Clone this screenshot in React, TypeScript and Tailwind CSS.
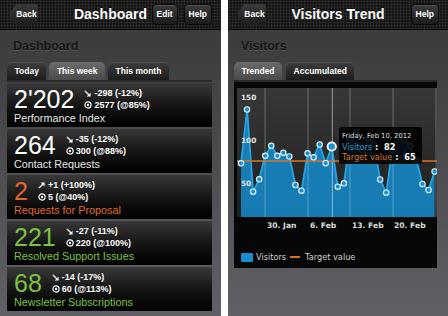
import React from "react";

type Kpi = {
  value: string;
  delta: string;
  up?: boolean;
  target: string;
  label: string;
  tone: "white" | "orange" | "green";
};

const kpis: Kpi[] = [
  { value: "2'202", delta: "-298 (-12%)", target: "2577 (@85%)", label: "Performance Index", tone: "white" },
  { value: "264", delta: "-35 (-12%)", target: "300 (@88%)", label: "Contact Requests", tone: "white" },
  { value: "2", delta: "+1 (+100%)", up: true, target: "5 (@40%)", label: "Requests for Proposal", tone: "orange" },
  { value: "221", delta: "-27 (-11%)", target: "220 (@100%)", label: "Resolved Support Issues", tone: "green" },
  { value: "68", delta: "-14 (-17%)", target: "60 (@113%)", label: "Newsletter Subscriptions", tone: "green" },
];

// visitors per day, already in screen y (abs coords of the 448x316 frame)
const visitorsY = [
  163.3, 109.5, 191.7, 179.3, 155.8, 145.8, 155.8, 152.7, 156.5, 185, 190.7, 153.3, 157.3, 144.5, 163.2,
  146.5, 186.7, 183.3, 140, 132, 150, 138, 145, 179.5, 192.7, 150, 136, 140, 146, 160, 184, 190, 171.5,
];

const ArrowIcon = ({ up }: { up?: boolean }) =>
  up ? (
    <svg width="7" height="7" viewBox="0 0 8 8">
      <path d="M1 7L5.5 2.5" stroke="white" strokeWidth="1.6" />
      <path d="M3 0.5H7.5V5Z" fill="white" />
    </svg>
  ) : (
    <svg width="7" height="7" viewBox="0 0 8 8">
      <path d="M1 1L5.5 5.5" stroke="white" strokeWidth="1.6" />
      <path d="M7.5 3V7.5H3Z" fill="white" />
    </svg>
  );

const TargetIcon = () => (
  <svg width="8" height="8" viewBox="0 0 8 8">
    <circle cx="4" cy="4" r="3.1" stroke="white" strokeWidth="1.2" fill="none" />
    <circle cx="4" cy="4" r="1.2" fill="white" />
  </svg>
);

const NavButton = ({ children }: { children: React.ReactNode }) => (
  <div className="h-[21px] px-[4px] flex items-center rounded-[4px] border border-[#0a0a0a] bg-linear-to-b from-[#3c3c3c] to-[#1c1c1c] shadow-[inset_0_1px_0_rgba(255,255,255,0.12)] text-[8.5px] font-bold text-white">
    {children}
  </div>
);

const BackButton = () => (
  <div className="h-[21px] w-[29px] pl-[6px] flex items-center justify-center rounded-r-[4px] bg-linear-to-b from-[#3c3c3c] to-[#1c1c1c] [clip-path:polygon(7px_0,100%_0,100%_100%,7px_100%,0_50%)] text-[8.5px] font-bold text-white">
    Back
  </div>
);

const Header = ({ title, right }: { title: string; right: React.ReactNode }) => (
  <div className="h-[30px] shrink-0 px-[9px] grid grid-cols-[1fr_auto_1fr] items-center bg-[#141414] bg-[radial-gradient(circle,#2f2f2f_0.8px,transparent_1.3px)] bg-[length:3px_3px] border-b border-[#080808]">
    <div className="justify-self-start">
      <BackButton />
    </div>
    <div className="text-[14px] font-bold text-white [text-shadow:0_-1px_0_rgba(0,0,0,0.8)]">{title}</div>
    <div className="justify-self-end flex gap-[6px]">{right}</div>
  </div>
);

const Tab = ({ label, active }: { label: string; active?: boolean }) => (
  <div
    className={`h-[18px] px-[7.5px] flex items-center rounded-t-[5px] text-[8.5px] font-bold text-white ${
      active
        ? "bg-linear-to-b from-[#6b6b6b] to-[#4a4a4a]"
        : "bg-linear-to-b from-[#3e3e3e] to-[#1c1c1c] shadow-[inset_0_1px_0_rgba(255,255,255,0.1)]"
    }`}
  >
    {label}
  </div>
);

const toneText = {
  white: "text-white",
  orange: "text-[#e5642b]",
  green: "text-[#7cc143]",
};

const labelText = {
  white: "text-[#e6e6e6]",
  orange: "text-[#e06a2e]",
  green: "text-[#7cc043]",
};

const KpiCard = ({ kpi }: { kpi: Kpi }) => (
  <div className="h-[44px] pl-[7px] pt-[3px] bg-linear-to-b from-[#393939] via-[#161616] to-[#020202]">
    <div className="flex items-center h-[26px]">
      <span className={`text-[25px] leading-[26px] ${toneText[kpi.tone]}`}>{kpi.value}</span>
      <div className="ml-[10px] flex flex-col text-[9px] font-bold leading-[12px] text-white">
        <div className="flex items-center gap-[3px]">
          <ArrowIcon up={kpi.up} />
          <span>{kpi.delta}</span>
        </div>
        <div className="flex items-center gap-[2px]">
          <TargetIcon />
          <span>{kpi.target}</span>
        </div>
      </div>
    </div>
    <div className={`text-[10.8px] leading-[13px] ${labelText[kpi.tone]}`}>{kpi.label}</div>
  </div>
);

const Chart = () => {
  const pts = visitorsY.map((y, i) => [241 + 6.05 * i, y] as const);
  const line = pts.map(([x, y]) => `${x.toFixed(1)},${y}`).join(" ");
  const area = `M${pts[0][0]},217 L${line.replace(/ /g, " L")} L${pts[pts.length - 1][0].toFixed(1)},217 Z`;
  const grid = [265, 308, 350, 393, 436];

  return (
    <svg width="203" height="150" viewBox="234 82 203 150" className="block">
      <defs>
        <linearGradient id="plotbg" x1="0" y1="0" x2="0" y2="1">
          <stop offset="0" stopColor="#383838" />
          <stop offset="1" stopColor="#1e1e1e" />
        </linearGradient>
      </defs>
      <rect x="237" y="88" width="200" height="129" fill="url(#plotbg)" />
      <path d={area} fill="rgb(20,140,205)" fillOpacity="0.85" />
      {grid.map((x) => (
        <line key={x} x1={x} y1="88" x2={x} y2="217" stroke="rgba(255,255,255,0.28)" strokeWidth="1" />
      ))}
      <line x1="332.3" y1="88" x2="332.3" y2="217" stroke="rgba(255,255,255,0.5)" strokeWidth="1" />
      <polyline points={line} fill="none" stroke="#23a4e3" strokeWidth="1.8" strokeLinejoin="round" />
      <line x1="237" y1="161" x2="437" y2="161" stroke="#d8742a" strokeWidth="1.5" />
      {pts.map(([x, y], i) =>
        i === 15 ? null : (
          <circle key={i} cx={x} cy={y} r="2.7" fill="#1a8fd0" stroke="#eaf5fb" strokeWidth="1.1" />
        )
      )}
      <circle cx={pts[15][0]} cy={pts[15][1]} r="4.2" fill="#1d93d4" stroke="#ffffff" strokeWidth="1.8" />
      <g fontFamily="'DejaVu Sans', sans-serif" fontWeight="bold" fontSize="7.3" fill="#e2e2e2">
        <text x="241" y="99.5">150</text>
        <text x="241" y="142.5">100</text>
        <text x="241" y="185.5">50</text>
      </g>
      <g fontFamily="'DejaVu Sans', sans-serif" fontWeight="bold" fontSize="7.6" fill="#dcdcdc">
        <text x="267" y="228">30. Jan</text>
        <text x="310" y="228">6. Feb</text>
        <text x="352" y="228">13. Feb</text>
        <text x="394" y="228">20. Feb</text>
      </g>
    </svg>
  );
};

export default function App() {
  return (
    <div className="w-[448px] h-[316px] overflow-hidden bg-white flex gap-[7px] font-['Liberation_Sans',Arial,sans-serif]">
      {/* dashboard screen */}
      <div className="w-[221px] h-full flex flex-col bg-linear-to-b from-[#383838] to-[#616066]">
        <Header
          title="Dashboard"
          right={
            <>
              <NavButton>Edit</NavButton>
              <NavButton>Help</NavButton>
            </>
          }
        />
        <div className="pl-[13px] mt-[8px] h-[16px] leading-[16px] text-[12.5px] font-bold text-[#151515] [text-shadow:0_1px_0_rgba(255,255,255,0.12)]">
          Dashboard
        </div>
        <div className="mt-[8px] ml-[7px] flex gap-[3px]">
          <Tab label="Today" />
          <Tab label="This week" active />
          <Tab label="This month" />
        </div>
        <div className="ml-[7px] w-[205px] h-[2px] bg-[#2a2a2a]" />
        <div className="ml-[7px] w-[205px] mt-[1px] flex flex-col gap-[2px]">
          {kpis.map((k) => (
            <KpiCard key={k.label} kpi={k} />
          ))}
        </div>
      </div>

      {/* visitors trend screen */}
      <div className="w-[220px] h-full flex flex-col bg-linear-to-b from-[#383838] to-[#616066]">
        <Header title="Visitors Trend" right={<NavButton>Help</NavButton>} />
        <div className="pl-[13px] mt-[8px] h-[16px] leading-[16px] text-[12.5px] font-bold text-[#151515] [text-shadow:0_1px_0_rgba(255,255,255,0.12)]">
          Visitors
        </div>
        <div className="mt-[8px] ml-[6px] flex gap-[4px]">
          <Tab label="Trended" active />
          <Tab label="Accumulated" />
        </div>
        <div className="ml-[6px] w-[203px] h-[2px] bg-[#2a2a2a]" />
        <div className="relative ml-[6px] w-[203px] h-[186px] bg-[#070707]">
          <Chart />
          <div className="mt-[20px] ml-[7px] flex items-center font-['DejaVu_Sans',sans-serif] text-[8.2px] leading-[10px] text-[#cfcfcf]">
            <span className="w-[12px] h-[9px] bg-[#1a8fd0] rounded-[1px]" />
            <span className="ml-[3px]">Visitors</span>
            <span className="ml-[4px] w-[10px] h-[2px] bg-[#d8742a]" />
            <span className="ml-[5px]">Target value</span>
          </div>
          <div className="absolute left-[105px] top-[45px] w-[83px] h-[37px] px-[3px] pt-[4px] rounded-[3px] bg-black/90 font-['DejaVu_Sans',sans-serif] leading-[10.5px] whitespace-nowrap">
            <div className="text-[6.8px] text-[#dddddd]">Friday, Feb 10, 2012</div>
            <div className="text-[8.2px]">
              <span className="text-[#3399cc]">Visitors</span>
              <span className="text-white font-bold"> : </span>
              <span className="ml-[3px] text-white font-bold">82</span>
            </div>
            <div className="text-[8.2px]">
              <span className="text-[#d8732c]">Target value</span>
              <span className="text-white font-bold"> : </span>
              <span className="ml-[3px] text-white font-bold">65</span>
            </div>
          </div>
        </div>
      </div>
    </div>
  );
}
